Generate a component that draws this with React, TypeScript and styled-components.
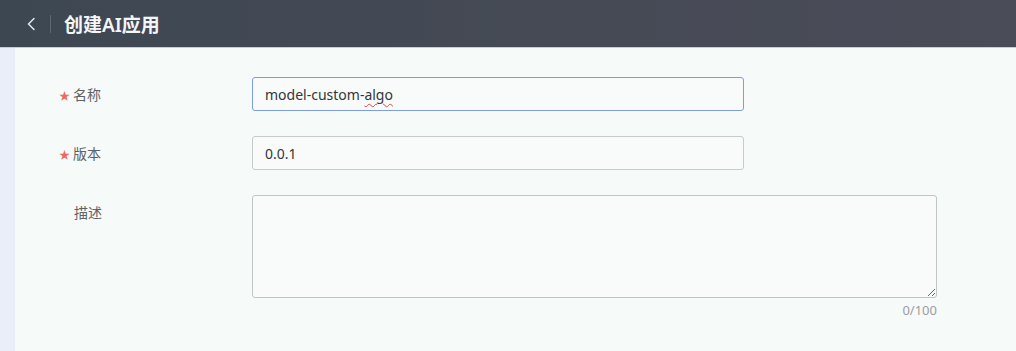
import styled, { createGlobalStyle } from 'styled-components';

const GlobalStyle = createGlobalStyle`
  html, body {
    margin: 0;
    padding: 0;
    height: 100%;
    background: #f6faf8;
    font-family: "Noto Sans", "Noto Sans CJK SC", sans-serif;
  }
  #root {
    height: 100%;
  }
`;

const Page = styled.div`
  display: flex;
  flex-direction: column;
  height: 351px;
  overflow: hidden;
`;

const Header = styled.header`
  display: flex;
  align-items: center;
  height: 47px;
  flex: none;
  padding-left: 25px;
  background: linear-gradient(90deg, #3d4752 0%, #454a55 50%, #4a4c58 100%);
  border-bottom: 1px solid #c9cdd4;
  box-sizing: content-box;
`;

const BackButton = styled.button`
  display: flex;
  align-items: center;
  justify-content: center;
  width: 12px;
  height: 16px;
  padding: 0;
  border: none;
  background: none;
  cursor: pointer;
`;

const Divider = styled.span`
  width: 1px;
  height: 18px;
  margin: 0 13px 0 13px;
  background: #5f6772;
`;

const Title = styled.h1`
  margin: 0;
  font-size: 19px;
  font-weight: 600;
  color: #f4f5f7;
  font-family: "Noto Sans", "Noto Sans CJK SC", sans-serif;
`;

const Body = styled.div`
  display: flex;
  flex: 1;
`;

const SideStrip = styled.div`
  width: 15px;
  flex: none;
  background: #e9eef8;
`;

const Main = styled.main`
  flex: 1;
  background: #f6faf8;
  padding: 29px 0 0 44px;
`;

const Form = styled.form`
  display: flex;
  flex-direction: column;
  gap: 25px;
`;

const Row = styled.div`
  display: grid;
  grid-template-columns: 193px auto;
  align-items: start;
`;

const Label = styled.label<{ $required?: boolean }>`
  display: flex;
  align-items: center;
  height: 34px;
  font-size: 14px;
  color: #5e6267;
  padding-left: ${({ $required }) => ($required ? '0' : '15px')};
`;

const Star = styled.span`
  color: #ec6a5e;
  font-size: 11px;
  margin-right: 3px;
  margin-top: 1px;
`;

const Field = styled.div<{ $focused?: boolean; $width: number }>`
  display: flex;
  align-items: center;
  box-sizing: border-box;
  width: ${({ $width }) => $width}px;
  height: 34px;
  padding: 0 12px;
  border: 1px solid ${({ $focused }) => ($focused ? '#7d9de2' : '#c8cbce')};
  border-radius: 3px;
  background: #f8fbfa;
  font-size: 14px;
  color: #33363a;
  font-family: "Noto Sans", "Noto Sans CJK SC", sans-serif;
`;

const Misspelled = styled.span`
  text-decoration: underline wavy #e04b3c;
  text-decoration-thickness: 1px;
  text-underline-offset: 3px;
`;

const AreaWrap = styled.div`
  display: flex;
  flex-direction: column;
  align-items: flex-end;
  width: 685px;
`;

const TextArea = styled.textarea`
  box-sizing: border-box;
  width: 100%;
  height: 103px;
  padding: 8px 12px;
  border: 1px solid #c2c5c8;
  border-radius: 3px;
  background: #f8fbfa;
  font-size: 14px;
  font-family: "Noto Sans", "Noto Sans CJK SC", sans-serif;
  resize: vertical;
  outline: none;
`;

const Counter = styled.span`
  margin-top: 3px;
  font-size: 13px;
  color: #9a9ea3;
`;

export default function App() {
  return (
    <Page>
      <GlobalStyle />
      <Header>
        <BackButton aria-label="返回">
          <svg width="10" height="14" viewBox="0 0 10 14" fill="none">
            <path d="M8 1.5 L2.5 7 L8 12.5" stroke="#e6e9ee" strokeWidth="1.5" strokeLinecap="round" strokeLinejoin="round" />
          </svg>
        </BackButton>
        <Divider />
        <Title>创建AI应用</Title>
      </Header>
      <Body>
        <SideStrip />
        <Main>
          <Form>
            <Row>
              <Label $required>
                <Star>★</Star>名称
              </Label>
              <Field $focused $width={492}>
                model-custom-<Misspelled>algo</Misspelled>
              </Field>
            </Row>
            <Row>
              <Label $required>
                <Star>★</Star>版本
              </Label>
              <Field $width={492}>0.0.1</Field>
            </Row>
            <Row>
              <Label>描述</Label>
              <AreaWrap>
                <TextArea />
                <Counter>0/100</Counter>
              </AreaWrap>
            </Row>
          </Form>
        </Main>
      </Body>
    </Page>
  );
}
